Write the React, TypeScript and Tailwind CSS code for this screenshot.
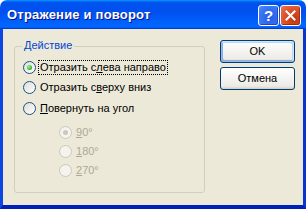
import React from "react";

function Radio({ checked = false, disabled = false }: { checked?: boolean; disabled?: boolean }) {
  return (
    <span
      className={
        "relative w-[13px] h-[13px] shrink-0 rounded-full border flex items-center justify-center " +
        (disabled
          ? "border-[#cac8bb] bg-[#f4f3ee]"
          : "border-[#1c5180] bg-[linear-gradient(135deg,#dcdcd7,#ffffff)]")
      }
    >
      {checked && (
        <span
          className={
            "w-[5px] h-[5px] rounded-full " +
            (disabled
              ? "bg-[#cac8bb]"
              : "bg-[radial-gradient(circle_at_35%_35%,#a8f0a0,#3ec13a_55%,#0f8f0d)]")
          }
        />
      )}
    </span>
  );
}

function RadioRow({
  children,
  checked = false,
  disabled = false,
  focused = false,
  h = "h-[20px]",
}: {
  children: React.ReactNode;
  checked?: boolean;
  disabled?: boolean;
  focused?: boolean;
  h?: string;
}) {
  return (
    <div className={"flex items-center " + h}>
      <Radio checked={checked} disabled={disabled} />
      <span
        className={
          "ml-[2px] px-[1px] border leading-[13px] whitespace-nowrap " +
          (focused ? "border-dotted border-black" : "border-transparent") +
          (disabled ? " text-[#aca899]" : " text-black")
        }
      >
        {children}
      </span>
    </div>
  );
}

function XPButton({ children, isDefault = false }: { children: React.ReactNode; isDefault?: boolean }) {
  return (
    <div
      className={
        "w-[75px] h-[23px] rounded-[3px] border border-[#003c74] flex items-center justify-center text-black bg-[linear-gradient(180deg,#ffffff,#ecebe6_86%,#d6d0c5)] " +
        (isDefault
          ? "shadow-[inset_-1px_1px_#cee7ff,inset_1px_-1px_#98b8ea,inset_-2px_2px_#bcd4f6,inset_2px_-2px_#89ade4]"
          : "shadow-[inset_0_-1px_#d6d0c5]")
      }
    >
      {children}
    </div>
  );
}

export default function App() {
  return (
    <div className="w-[306px] h-[209px] flex flex-col bg-white text-[11px] font-['Liberation_Sans',Arial,sans-serif]">
      {/* Title bar */}
      <div className="h-[29px] shrink-0 rounded-t-[7px] flex items-center bg-[linear-gradient(180deg,#0997ff,#0053ee_8%,#0050ee_40%,#0066ff_88%,#0066ff_93%,#005bff_95%,#003dd7_96%,#003dd7)]">
        <span className="pl-[7px] text-white font-bold text-[13px] [text-shadow:1px_1px_#0f1089] tracking-[0.2px]">
          Отражение и поворот
        </span>
        <div className="ml-auto mr-[5px] flex gap-[1px] mt-[1px]">
          <div className="w-[21px] h-[21px] rounded-[3px] border border-white bg-[radial-gradient(circle_at_60%_60%,#2a5be8,#3a78f5_70%,#5f95f8)] flex items-center justify-center text-white font-bold text-[15px] leading-none shadow-[inset_-1px_-1px_#1f46c0]">
            ?
          </div>
          <div className="w-[21px] h-[21px] rounded-[3px] border border-white bg-[radial-gradient(circle_at_70%_70%,#c1350e,#e0552f_60%,#e87a5a)] flex items-center justify-center shadow-[inset_-1px_-1px_#a52b0a]">
            <svg width="11" height="11" viewBox="0 0 11 11">
              <path d="M1.5 1.5 L9.5 9.5 M9.5 1.5 L1.5 9.5" stroke="white" strokeWidth="2" strokeLinecap="square" />
            </svg>
          </div>
        </div>
      </div>

      {/* Body with frame */}
      <div className="flex-1 border-l-[3px] border-r-[3px] border-b-[4px] border-l-[#0b47e0] border-r-[#0835d0] border-b-[#0021b8] bg-[#ece9d8] flex items-start">
        {/* Group box */}
        <div className="relative ml-[11px] mt-[17px] w-[191px] h-[147px] border border-[#d0d0bf] rounded-[3px]">
          <span className="absolute left-[7px] top-[-8px] px-[2px] bg-[#ece9d8] text-[#0046d5] leading-[13px]">
            Действие
          </span>
          <div className="pl-[8px] pt-[10px] flex flex-col">
            <RadioRow checked focused>
              Отразить с<u>л</u>ева направо
            </RadioRow>
            <RadioRow h="h-[21px]">
              Отразить с<u>в</u>ерху вниз
            </RadioRow>
            <RadioRow h="h-[21px]">
              <u>П</u>овернуть на угол
            </RadioRow>
            <div className="ml-[36px] mt-[4px] flex flex-col">
              <RadioRow checked disabled h="h-[19px]">
                <u>9</u>0°
              </RadioRow>
              <RadioRow disabled h="h-[19px]">
                <u>1</u>80°
              </RadioRow>
              <RadioRow disabled h="h-[19px]">
                <u>2</u>70°
              </RadioRow>
            </div>
          </div>
        </div>

        {/* Buttons */}
        <div className="ml-[15px] mt-[11px] flex flex-col gap-[4px]">
          <XPButton isDefault>OK</XPButton>
          <XPButton>Отмена</XPButton>
        </div>
      </div>
    </div>
  );
}
